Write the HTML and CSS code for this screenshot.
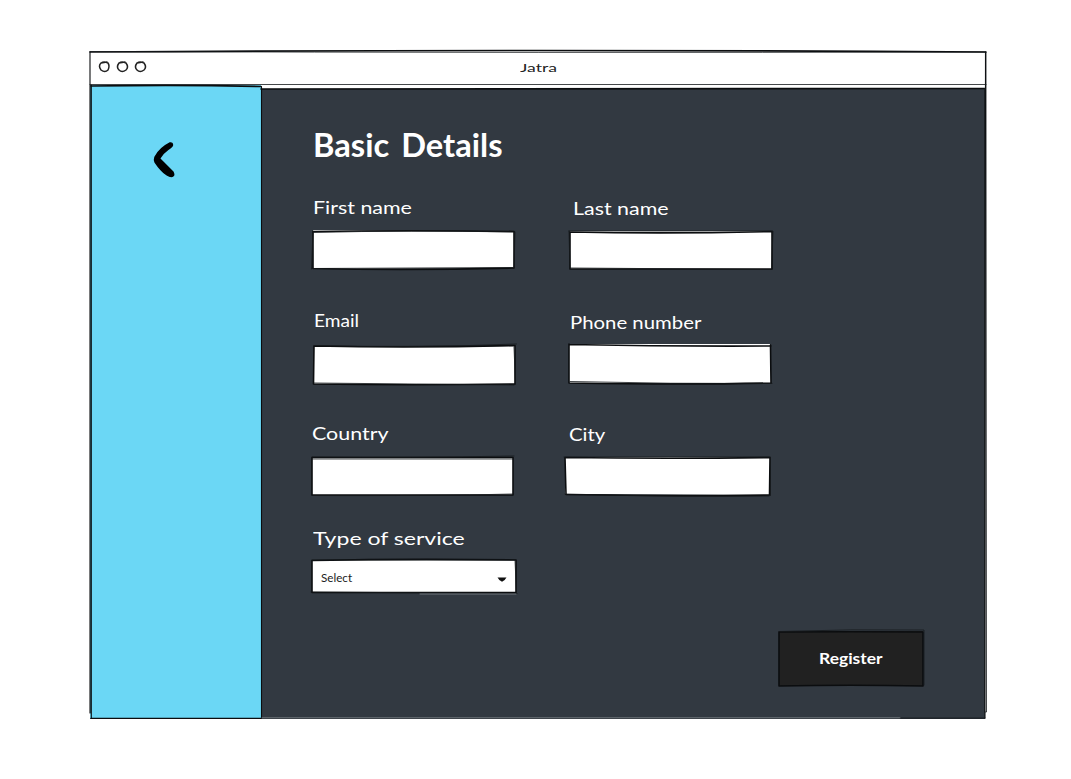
FILE: index.html
```html
<!DOCTYPE html>
<html lang="en">
<head>
<meta charset="utf-8">
<title>Jatra</title>
<link rel="stylesheet" href="styles.css">
</head>
<body>
<div class="window">
  <header class="titlebar">
    <svg class="dots" width="54" height="16" viewBox="96 59 54 16">
      <path d="M101 63Q104 61 108 63Q110 66 108 70Q105 73 101 70Q98 66 101 63L107 62"/>
      <path d="M119 63Q122 61 126 63Q129 67 126 70Q122 73 119 70Q116 67 119 63L125 62"/>
      <path d="M137 63Q140 61 144 63Q147 67 144 70Q140 73 137 70Q134 67 137 63L143 62"/>
    </svg>
    <span class="title"><span class="ink w-title">Jatra</span></span>
  </header>
  <div class="body">
    <aside class="sidebar">
      <svg class="back" width="30" height="44" viewBox="149 138 30 44">
        <path d="M170 143Q172.500 142.500 172.500 145Q172 147 168 149.500Q163 153 159.500 158.500L173 172Q174.500 175 173 176Q171 177.500 167 175Q161 171 155 162Q154 160 155 157Q160 148 170 143Z"/>
      </svg>
    </aside>
    <main class="main">
      <h1 class="heading"><span class="ink w-heading">Basic Details</span></h1>
      <form class="form">
        <div class="field">
          <label class="label"><span class="ink w-first">First name</span></label>
          <svg class="box" width="212" height="48" viewBox="308 226 212 48">
            <path class="paper" d="M313 230L514 231.500L514 268L313 269Z"/>
            <path class="line" d="M313 231.500Q410 230 514 231.500L514 268Q410 270.500 313 268.500Z"/>
            <path class="thin" d="M313 232.500Q410 230 514 232M515 232L514 268M313 231L311.500 269M312 268.500L514 267.500"/>
          </svg>
        </div>
        <div class="field">
          <label class="label l-last"><span class="ink w-last">Last name</span></label>
          <svg class="box" width="220" height="48" viewBox="560 226 220 48">
            <path class="paper" d="M570 231L772 231L772 269L570 269Z"/>
            <path class="line" d="M570 232Q670 234 772 231.500L772 269H570Z"/>
            <path class="thin" d="M569 231H773L771.500 269M569 231L570 269M570 268L772 269.500"/>
          </svg>
        </div>
        <div class="field">
          <label class="label l-email"><span class="ink w-email">Email</span></label>
          <svg class="box" width="212" height="48" viewBox="308 340 212 48">
            <path class="paper" d="M314 346Q410 348 515 346V384H314Z"/>
            <path class="line" d="M314 346Q415 348 515 345.500V384Q410 385.500 313.500 384Z"/>
            <path class="thin" d="M314 345.500Q420 348 516.500 344M514 347L515.500 384M313.500 383L514 385"/>
          </svg>
        </div>
        <div class="field">
          <label class="label l-phone"><span class="ink w-phone">Phone number</span></label>
          <svg class="box" width="220" height="48" viewBox="560 340 220 48">
            <path class="paper" d="M569 344H770L771 383H569Z"/>
            <path class="line" d="M569 344.500Q670 346.500 771 346M770.500 345L771 383Q690 385 569 383V344"/>
            <path class="thin" d="M570 381.500Q670 384 772 383.500"/>
          </svg>
        </div>
        <div class="field">
          <label class="label l-country"><span class="ink w-country">Country</span></label>
          <svg class="box" width="212" height="48" viewBox="308 452 212 48">
            <path class="paper" d="M312 457.500H513V495H312Z"/>
            <path class="line" d="M312 457.500H513V495H312Z"/>
            <path class="thin" d="M312 457Q410 458 514 456M312 459H513M312 495.500Q430 496 513 494"/>
          </svg>
        </div>
        <div class="field">
          <label class="label l-city"><span class="ink w-city">City</span></label>
          <svg class="box" width="220" height="48" viewBox="560 452 220 48">
            <path class="paper" d="M565 457H770V495L565 494Z"/>
            <path class="line" d="M565 457.500Q670 459 770 457.500L769.500 495Q670 496.500 566 494.500Z"/>
            <path class="thin" d="M564 457H770.500V495.500M565 494Q670 497 769 496"/>
          </svg>
        </div>
        <div class="field">
          <label class="label"><span class="ink w-type">Type of service</span></label>
          <div class="select">
            <svg class="box" width="212" height="46" viewBox="308 554 212 46">
              <path class="paper" d="M312 560H516V593H312Z"/>
              <path class="line" d="M312 560.500Q410 558.500 516 560V592.500H312Z"/>
              <path class="thin" d="M312 560H516M311 592L517 593.500M515 560L516.500 593"/>
              <path class="glint" d="M420 594H516"/>
              <path class="arrow" d="M497.500 577.500H506.500Q505 580.500 502 581.700Q499 580.500 497.500 577.500Z"/>
            </svg>
            <span class="value"><span class="ink w-select">Select</span></span>
          </div>
        </div>
      </form>
      <button class="register" type="button">
        <svg class="outline" width="152" height="64" viewBox="775 627 152 64">
          <path class="fill" d="M779 631.500L923 631V686H779Z"/>
          <path class="line" d="M779 632Q850 631.500 923 632V686Q850 684.500 779 686Z"/>
          <path class="thin" d="M779 631.500Q850 629 924 630V685"/>
        </svg>
        <span class="caption"><span class="ink w-register">Register</span></span>
      </button>
    </main>
  </div>
  <svg class="frame" width="907" height="680" viewBox="85 45 907 680">
    <path class="line" d="M90 52Q540 49 986 52M91 718.500H261M91 86Q180 84.500 261 86.500M261 89Q640 87.500 985 88.500"/>
    <path class="side" d="M90 52V713M91.300 85V718M261.500 86.500V718M985.500 52L985 718"/>
    <path class="thin" d="M90 51.500Q540 53 986 52L986.500 712H984.500V88.500M90 84.500H986M261 719.200H985M900 718H985"/>
    <path class="glint" d="M262 717.800H900"/>
  </svg>
</div>
</body>
</html>
```
FILE: styles.css
```css
body {
  margin: 0;
  background: #fff;
  font-family: Lato, "Noto Sans", sans-serif;
  overflow: hidden;
}
svg { display: block; overflow: visible; fill: none; stroke-linejoin: round; stroke-linecap: round; }
.window { position: relative; width: 896px; height: 668px; margin: 51px 0 0 90px; }
.titlebar { position: relative; display: flex; align-items: flex-start; height: 34px; }
.dots { margin: 8px 0 0 6px; }
.dots path { stroke: #222; stroke-width: 1.5; }
.title { flex: 1; padding-left: 370px; line-height: 34px; font-size: 12px; color: #222; }
.body { display: flex; height: 634px; }
.sidebar { width: 171px; background: #6bd7f5; }
.back { margin: 53px 0 0 59px; }
.back path { fill: #000; stroke: #000; stroke-width: 1.4; }
.main { position: relative; display: flex; flex-direction: column; width: 724px; height: 630px; margin-top: 4px; background: #323941; color: #fff; }
.heading { margin: 36px 0 0 52px; height: 69px; font-size: 32px; line-height: 40px; font-weight: 700; word-spacing: 4px; }
.form { display: grid; grid-template-columns: 212px 220px; grid-template-rows: 114px 112px 105px 80px; column-gap: 40px; margin-left: 47px; }
.label { display: block; height: 23px; line-height: 24px; margin-bottom: 8px; padding: 1px 0 0 5px; font-size: 18px; white-space: nowrap; }
.l-last { padding-left: 13px; }
.l-email { padding-left: 6px; padding-top: 0; height: 24px; }
.l-phone { padding-left: 10px; }
.l-country { padding-left: 4px; }
.l-city { padding-left: 9px; }
.l-last, .l-phone, .l-city { padding-top: 2px; height: 22px; }
.ink { display: inline-block; transform-origin: left center; white-space: nowrap; }
.w-title { transform: scaleX(1.46); }
.w-heading { transform: scaleX(1.02); }
.w-first, .w-last, .w-country { transform: scaleX(1.19); }
.w-email { transform: scaleX(1.06); }
.w-phone { transform: scaleX(1.13); }
.w-city { transform: scaleX(1.13); }
.w-type { transform: scaleX(1.28); }
.w-select { transform: scaleX(1.06); }
.w-register { transform: scaleX(1.09); }
.paper { fill: #fff; }
.line { stroke: #0b0d0f; stroke-width: 1.6; }
.side { stroke: #0b0d0f; stroke-width: 1.1; }
.thin { stroke: #15191c; stroke-width: 0.8; }
.select { position: relative; margin-top: -3px; }
.arrow { fill: #111; }
.value { position: absolute; left: 13px; top: 15px; line-height: 18px; font-size: 11px; color: #222; }
.register { position: relative; display: grid; align-self: flex-end; width: 152px; height: 64px; margin: 22px 58px 0 0; padding: 0; border: 0; background: none; font: 700 16px Lato, sans-serif; color: #fff; }
.outline { grid-area: 1 / 1; }
.fill { fill: #212121; }
.caption { grid-area: 1 / 1; position: relative; padding: 20px 0 0 44px; line-height: 22px; text-align: left; }
.frame { position: absolute; left: -5px; top: -6px; pointer-events: none; }
.glint { stroke: #8b9197; stroke-width: 0.7; }
```
